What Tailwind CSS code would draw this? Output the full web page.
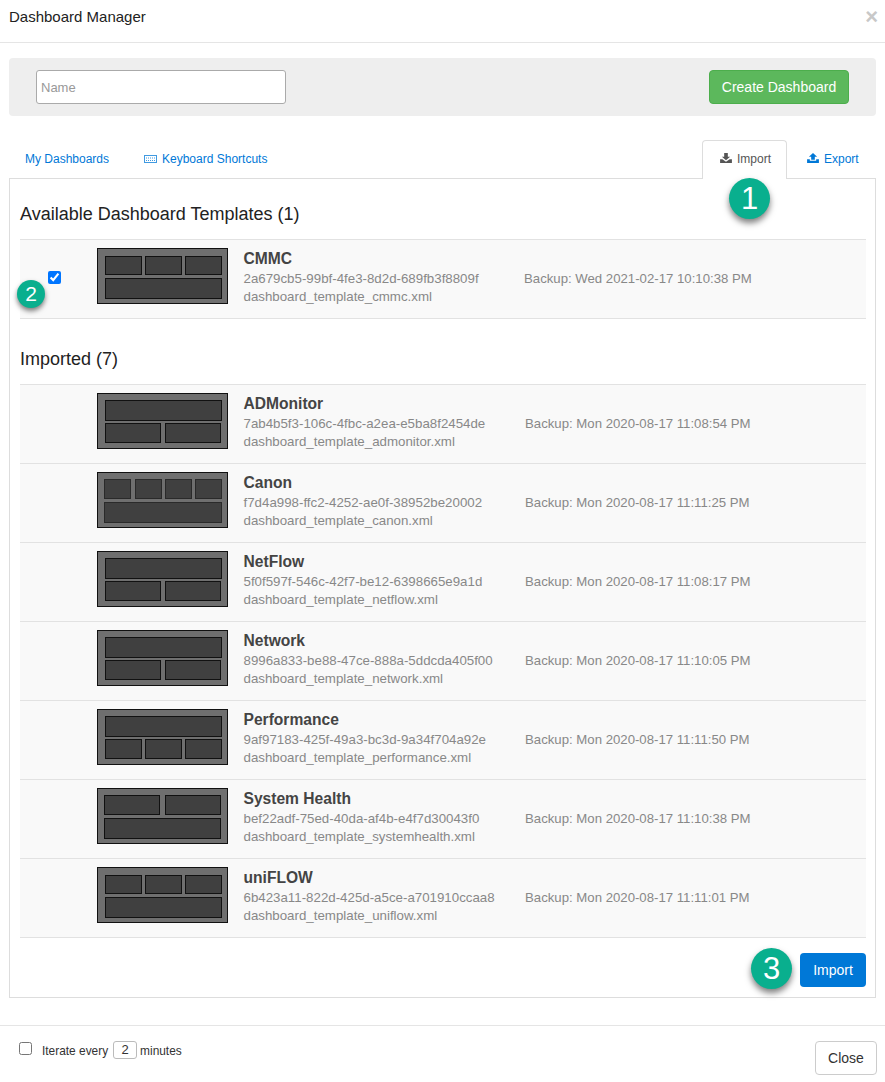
<!DOCTYPE html>
<html lang="en">
  <head>
    <meta charset="UTF-8" />
    <title>Dashboard Manager</title>
    <script src="https://cdn.jsdelivr.net/npm/@tailwindcss/browser@4"></script>
  </head>
  <body class="bg-white font-['Liberation_Sans',Arial,sans-serif] text-[#333]">
    <div class="relative w-[885px] h-[1082px] overflow-hidden">

      <!-- Header -->
      <header class="h-[43px] border-b border-[#e5e5e5] pl-[9px] pr-[7px] flex justify-between">
        <h1 class="text-[15px] leading-[34px] text-[#222]">Dashboard Manager</h1>
        <span class="text-[22px] font-bold leading-[34px] text-[#c8c8c8]">×</span>
      </header>

      <!-- Create bar -->
      <div class="mt-[15px] mx-[9px] w-[867px] h-[58px] bg-[#eeeeee] rounded-[4px] pl-[27px] pr-[27px] flex items-center justify-between">
        <input type="text" placeholder="Name" class="w-[250px] h-[34px] bg-white border border-[#aaaaaa] rounded-[3px] px-[4px] text-[13px] placeholder:text-[#999]" />
        <button class="w-[140px] h-[34px] bg-[#5cb85c] border border-[#4cae4c] rounded-[4px] text-white text-[14px]">Create Dashboard</button>
      </div>

      <!-- Tabs -->
      <nav class="mt-[24px] mx-[9px] w-[867px] h-[39px] flex text-[12px] text-[#0078d7] relative z-10">
        <a class="pl-[16px] pt-[10px] w-[135px]">My Dashboards</a>
        <a class="pt-[10px] flex gap-[5px] items-start">
          <svg class="mt-[4px]" width="13" height="10" viewBox="0 0 13 10" fill="none" stroke="currentColor" stroke-opacity=".75"><rect x=".5" y="1.5" width="12" height="7" /><path d="M2 4h9M2 6.500h9" stroke-dasharray="1 1" /></svg>
          Keyboard Shortcuts
        </a>
        <a class="ml-auto w-[85px] h-[39px] bg-white border border-[#dddddd] border-b-0 rounded-t-[4px] pt-[9px] pl-[17px] flex gap-[5px] items-start text-[#555555]">
          <svg class="mt-[3px]" width="12" height="10" viewBox="0 0 13 11" fill="currentColor"><path d="M4.500 0h4v4H11L6.500 8 2 4h2.500zM0 7h2.500l4 2.500 4-2.500H13v4H0z" /></svg>
          Import
        </a>
        <a class="w-[89px] pt-[10px] pl-[20px] flex gap-[5px] items-start">
          <svg class="mt-[3px]" width="12" height="10" viewBox="0 0 13 11" fill="currentColor"><path d="M6.500 0 11 4H8.500v3.500h-4V4H2zM0 7h3v1.500h7V7h3v4H0z" /></svg>
          Export
        </a>
      </nav>

      <!-- Panel -->
      <section class="-mt-px mx-[9px] w-[867px] h-[820px] border border-[#dddddd] pl-[10px] pr-[9px]">
        <h2 class="text-[18px] leading-[20px] pt-[25px] h-[60px] text-[#222]">Available Dashboard Templates (1)</h2>

        <div class="border-y border-[#e2e2e2] bg-[#f9f9f9] h-[80px] flex">
          <div class="w-[77px] pl-[28px] pt-[31px]"><input type="checkbox" checked class="block w-[13px] h-[13px] m-0" /></div>
          <svg class="mt-[8px] shrink-0" width="131" height="56" viewBox="0 0 131 56" fill="#404040" stroke="#111"><rect x=".5" y=".5" width="130" height="55" fill="#6f6f6f" /><rect x="8.500" y="8.500" width="36" height="18" /><rect x="48.500" y="8.500" width="36" height="18" /><rect x="88.500" y="8.500" width="36" height="18" /><rect x="8.500" y="30.500" width="116" height="20" /></svg>
          <div class="ml-[15.5px] w-[280.5px] pt-[9px] text-[13.3px] text-[#888]">
            <div class="text-[15.6px] leading-[20px] font-bold text-[#444]">CMMC</div>
            <div class="leading-[20px]">2a679cb5-99bf-4fe3-8d2d-689fb3f8809f</div>
            <div class="leading-[16px]">dashboard_template_cmmc.xml</div>
          </div>
          <div class="pt-[29px] text-[13.2px] leading-[20px] text-[#888]">Backup: Wed 2021-02-17 10:10:38 PM</div>
        </div>

        <h2 class="text-[18px] leading-[20px] pt-[30px] h-[65px] text-[#222]">Imported (7)</h2>

        <div class="border-t border-[#e2e2e2]">
          <div class="border-b border-[#e2e2e2] bg-[#f9f9f9] h-[79px] flex">
            <div class="w-[77px]"></div>
            <svg class="mt-[8px] shrink-0" width="131" height="56" viewBox="0 0 131 56" fill="#404040" stroke="#111"><rect x=".5" y=".5" width="130" height="55" fill="#6f6f6f" /><rect x="8.500" y="7.500" width="116" height="20" /><rect x="8.500" y="30.500" width="55" height="19" /><rect x="68.500" y="30.500" width="55" height="19" /></svg>
            <div class="ml-[15.5px] w-[281.5px] pt-[9px] text-[13.3px] text-[#888]">
              <div class="text-[15.6px] leading-[20px] font-bold text-[#444]">ADMonitor</div>
              <div class="leading-[20px]">7ab4b5f3-106c-4fbc-a2ea-e5ba8f2454de</div>
              <div class="leading-[15px]">dashboard_template_admonitor.xml</div>
            </div>
            <div class="pt-[29px] text-[13.2px] leading-[20px] text-[#888]">Backup: Mon 2020-08-17 11:08:54 PM</div>
          </div>

          <div class="border-b border-[#e2e2e2] bg-[#f9f9f9] h-[79px] flex">
            <div class="w-[77px]"></div>
            <svg class="mt-[8px] shrink-0" width="131" height="56" viewBox="0 0 131 56" fill="#404040" stroke="#2a2a2a"><rect x=".5" y=".5" width="130" height="55" fill="#6f6f6f" stroke="#111" /><rect x="7.500" y="7.500" width="26" height="19" /><rect x="38.500" y="7.500" width="26" height="19" /><rect x="68.500" y="7.500" width="26" height="19" /><rect x="98.500" y="7.500" width="26" height="19" /><rect x="7.500" y="30.500" width="117" height="20" /></svg>
            <div class="ml-[15.5px] w-[281.5px] pt-[9px] text-[13.3px] text-[#888]">
              <div class="text-[15.6px] leading-[20px] font-bold text-[#444]">Canon</div>
              <div class="leading-[20px]">f7d4a998-ffc2-4252-ae0f-38952be20002</div>
              <div class="leading-[15px]">dashboard_template_canon.xml</div>
            </div>
            <div class="pt-[29px] text-[13.2px] leading-[20px] text-[#888]">Backup: Mon 2020-08-17 11:11:25 PM</div>
          </div>

          <div class="border-b border-[#e2e2e2] bg-[#f9f9f9] h-[79px] flex">
            <div class="w-[77px]"></div>
            <svg class="mt-[8px] shrink-0" width="131" height="56" viewBox="0 0 131 56" fill="#404040" stroke="#111"><rect x=".5" y=".5" width="130" height="55" fill="#6f6f6f" /><rect x="8.500" y="7.500" width="116" height="20" /><rect x="8.500" y="30.500" width="55" height="19" /><rect x="68.500" y="30.500" width="55" height="19" /></svg>
            <div class="ml-[15.5px] w-[281.5px] pt-[9px] text-[13.3px] text-[#888]">
              <div class="text-[15.6px] leading-[20px] font-bold text-[#444]">NetFlow</div>
              <div class="leading-[20px]">5f0f597f-546c-42f7-be12-6398665e9a1d</div>
              <div class="leading-[15px]">dashboard_template_netflow.xml</div>
            </div>
            <div class="pt-[29px] text-[13.2px] leading-[20px] text-[#888]">Backup: Mon 2020-08-17 11:08:17 PM</div>
          </div>

          <div class="border-b border-[#e2e2e2] bg-[#f9f9f9] h-[79px] flex">
            <div class="w-[77px]"></div>
            <svg class="mt-[8px] shrink-0" width="131" height="56" viewBox="0 0 131 56" fill="#404040" stroke="#111"><rect x=".5" y=".5" width="130" height="55" fill="#6f6f6f" /><rect x="8.500" y="7.500" width="116" height="20" /><rect x="8.500" y="30.500" width="55" height="19" /><rect x="68.500" y="30.500" width="55" height="19" /></svg>
            <div class="ml-[15.5px] w-[281.5px] pt-[9px] text-[13.3px] text-[#888]">
              <div class="text-[15.6px] leading-[20px] font-bold text-[#444]">Network</div>
              <div class="leading-[20px]">8996a833-be88-47ce-888a-5ddcda405f00</div>
              <div class="leading-[15px]">dashboard_template_network.xml</div>
            </div>
            <div class="pt-[29px] text-[13.2px] leading-[20px] text-[#888]">Backup: Mon 2020-08-17 11:10:05 PM</div>
          </div>

          <div class="border-b border-[#e2e2e2] bg-[#f9f9f9] h-[79px] flex">
            <div class="w-[77px]"></div>
            <svg class="mt-[8px] shrink-0" width="131" height="56" viewBox="0 0 131 56" fill="#404040" stroke="#111"><rect x=".5" y=".5" width="130" height="55" fill="#6f6f6f" /><rect x="8.500" y="7.500" width="116" height="20" /><rect x="8.500" y="30.500" width="36" height="19" /><rect x="48.500" y="30.500" width="36" height="19" /><rect x="88.500" y="30.500" width="36" height="19" /></svg>
            <div class="ml-[15.5px] w-[281.5px] pt-[9px] text-[13.3px] text-[#888]">
              <div class="text-[15.6px] leading-[20px] font-bold text-[#444]">Performance</div>
              <div class="leading-[20px]">9af97183-425f-49a3-bc3d-9a34f704a92e</div>
              <div class="leading-[15px]">dashboard_template_performance.xml</div>
            </div>
            <div class="pt-[29px] text-[13.2px] leading-[20px] text-[#888]">Backup: Mon 2020-08-17 11:11:50 PM</div>
          </div>

          <div class="border-b border-[#e2e2e2] bg-[#f9f9f9] h-[79px] flex">
            <div class="w-[77px]"></div>
            <svg class="mt-[8px] shrink-0" width="131" height="56" viewBox="0 0 131 56" fill="#404040" stroke="#111"><rect x=".5" y=".5" width="130" height="55" fill="#6f6f6f" /><rect x="7.500" y="7.500" width="55" height="19" /><rect x="68.500" y="7.500" width="55" height="19" /><rect x="7.500" y="30.500" width="116" height="20" /></svg>
            <div class="ml-[15.5px] w-[281.5px] pt-[9px] text-[13.3px] text-[#888]">
              <div class="text-[15.6px] leading-[20px] font-bold text-[#444]">System Health</div>
              <div class="leading-[20px]">bef22adf-75ed-40da-af4b-e4f7d30043f0</div>
              <div class="leading-[15px]">dashboard_template_systemhealth.xml</div>
            </div>
            <div class="pt-[29px] text-[13.2px] leading-[20px] text-[#888]">Backup: Mon 2020-08-17 11:10:38 PM</div>
          </div>

          <div class="border-b border-[#e2e2e2] bg-[#f9f9f9] h-[79px] flex">
            <div class="w-[77px]"></div>
            <svg class="mt-[8px] shrink-0" width="131" height="56" viewBox="0 0 131 56" fill="#404040" stroke="#111"><rect x=".5" y=".5" width="130" height="55" fill="#6f6f6f" /><rect x="8.500" y="8.500" width="36" height="18" /><rect x="48.500" y="8.500" width="36" height="18" /><rect x="88.500" y="8.500" width="36" height="18" /><rect x="8.500" y="30.500" width="116" height="20" /></svg>
            <div class="ml-[15.5px] w-[281.5px] pt-[9px] text-[13.3px] text-[#888]">
              <div class="text-[15.6px] leading-[20px] font-bold text-[#444]">uniFLOW</div>
              <div class="leading-[20px]">6b423a11-822d-425d-a5ce-a701910ccaa8</div>
              <div class="leading-[15px]">dashboard_template_uniflow.xml</div>
            </div>
            <div class="pt-[29px] text-[13.2px] leading-[20px] text-[#888]">Backup: Mon 2020-08-17 11:11:01 PM</div>
          </div>
        </div>

        <div class="mt-[15px] flex justify-end">
          <button class="w-[66px] h-[34px] bg-[#0078d7] rounded-[4px] text-white text-[14px]">Import</button>
        </div>
      </section>

      <!-- Footer -->
      <footer class="mt-[27px] border-t border-[#e5e5e5] pl-[19px] pr-[8px] flex justify-between">
        <div class="pt-[15px] flex items-start text-[11.9px] text-[#333]">
          <input type="checkbox" class="block w-[13px] h-[13px] m-0 mt-px" />
          <span class="ml-[10px] leading-[20px]">Iterate every</span>
          <span class="ml-[5px] w-[24px] h-[18px] border border-[#bbbbbb] rounded-[3px] text-center text-[13px] leading-[16px]">2</span>
          <span class="ml-[3px] leading-[20px]">minutes</span>
        </div>
        <button class="mt-[15px] w-[62px] h-[34px] bg-white border border-[#cccccc] rounded-[4px] text-[14px] text-[#333]">Close</button>
      </footer>

      <!-- Callouts -->
      <span class="absolute left-[729px] top-[178px] z-20 w-[41px] h-[41px] rounded-full bg-[#09af8e] shadow-[0_4px_6px_rgba(0,0,0,0.5)] text-white text-[31px] leading-[41px] text-center">1</span>
      <span class="absolute left-[17px] top-[280px] z-20 w-[28px] h-[28px] rounded-full bg-[#09af8e] shadow-[0_3px_5px_rgba(0,0,0,0.5)] text-white text-[21px] leading-[28px] text-center">2</span>
      <span class="absolute left-[751px] top-[948px] z-20 w-[41px] h-[41px] rounded-full bg-[#09af8e] shadow-[0_4px_6px_rgba(0,0,0,0.5)] text-white text-[31px] leading-[41px] text-center">3</span>
    </div>
  </body>
</html>
